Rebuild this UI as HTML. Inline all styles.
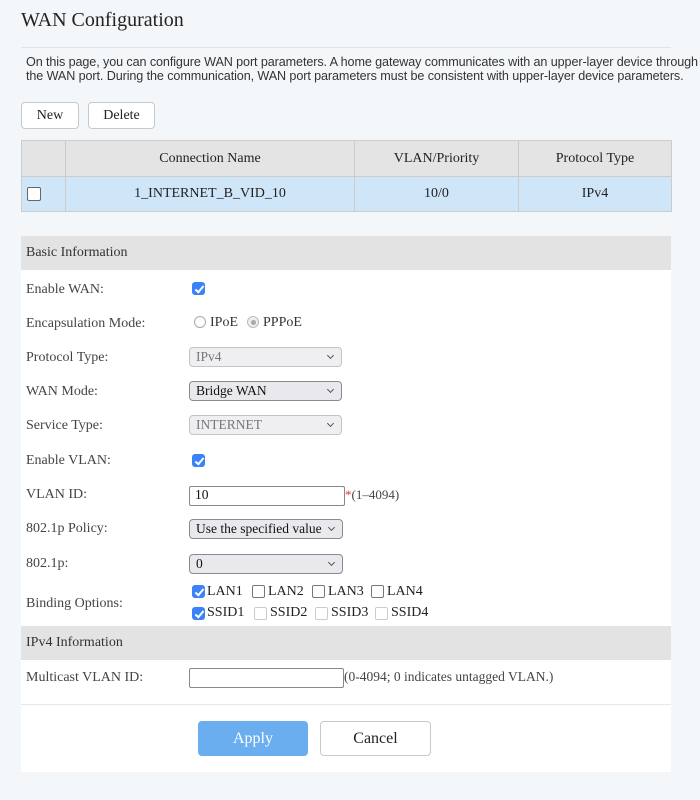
<!DOCTYPE html>
<html><head><style>
body{margin:0;width:700px;height:800px;background:#f4f7fa;font-family:"Liberation Serif",serif;color:#333;position:relative;overflow:hidden}
.a{position:absolute}
.t{font-size:14px;color:#444}
.sel{position:absolute;left:189px;width:153px;height:20px;border:1px solid #c3c3c8;border-radius:4px;background:#efeff2;font-size:13.5px;box-sizing:border-box;padding:1px 6px;color:#777}
.sel.on{border-color:#8a8a90;background:#e9e9ed;color:#111}
.sel:after{content:"";position:absolute;right:8px;top:5px;width:4px;height:4px;border-right:1.3px solid #555;border-bottom:1.3px solid #555;transform:rotate(45deg)}
.cb{position:absolute;width:13px;height:13px;border-radius:3px;background:#3b82f6;box-sizing:border-box}
.cb:after{content:"";position:absolute;left:4.5px;top:1.5px;width:3px;height:7px;border-right:2px solid #fff;border-bottom:2px solid #fff;transform:rotate(40deg)}
.ucb{position:absolute;width:13px;height:13px;border:1.5px solid #777;border-radius:2px;box-sizing:border-box;background:#fff}
.ucb.d{border-color:#ccc;border-width:1px}
.hd{position:absolute;left:21px;width:650px;height:34px;background:#e3e3e3;font-size:14px;line-height:34px;padding-left:5px;box-sizing:border-box;color:#333}
.btn{position:absolute;border:1px solid #c9c9c9;border-radius:4px;background:#fff;text-align:center;box-sizing:border-box;font-size:14px;color:#222}
td{border:1px solid #ccc;text-align:center;font-size:14px;color:#222;padding:0}
</style></head><body>
<div class="a" style="left:21px;top:9px;font-size:20px;color:#222">WAN Configuration</div>
<div class="a" style="left:21px;top:47px;width:650px;height:1px;background:#e3e3e3"></div>
<div class="a" style="left:26px;top:55px;width:680px;font-family:'Liberation Sans',sans-serif;font-size:12.6px;line-height:14px;color:#333;letter-spacing:-0.1px">On this page, you can configure WAN port parameters. A home gateway communicates with an upper-layer device through<br>the WAN port. During the communication, WAN port parameters must be consistent with upper-layer device parameters.</div>
<div class="btn" style="left:21px;top:102px;width:58px;height:27px;line-height:25px">New</div>
<div class="btn" style="left:88px;top:102px;width:67px;height:27px;line-height:25px">Delete</div>
<table class="a" style="left:21px;top:140px;width:651px;border-collapse:collapse">
<tr style="background:#e4e4e4;height:36px"><td style="width:43px"></td><td style="width:288px">Connection Name</td><td style="width:163px">VLAN/Priority</td><td>Protocol Type</td></tr>
<tr style="background:#cfe5f8;height:35px"><td style="text-align:left"><span style="display:inline-block;width:12px;height:12px;border:1.5px solid #666;border-radius:2px;background:#fff;margin-left:5px;vertical-align:middle"></span></td><td>1_INTERNET_B_VID_10</td><td>10/0</td><td>IPv4</td></tr>
</table>
<div class="a" style="left:21px;top:236px;width:650px;height:536px;background:#fff"></div>
<div class="hd" style="top:236px">Basic Information</div>
<div class="a t" style="left:26px;top:282px">Enable WAN:</div><div class="cb" style="left:192px;top:282px"></div>
<div class="a t" style="left:26px;top:316px">Encapsulation Mode:</div>
<div class="a" style="left:194px;top:316px;width:12px;height:12px;border:1px solid #aaa;border-radius:50%;box-sizing:border-box"></div>
<div class="a t" style="left:210px;top:315px;color:#333">IPoE</div>
<div class="a" style="left:247px;top:316px;width:12px;height:12px;border:1px solid #bbb;border-radius:50%;box-sizing:border-box;background:#eee"><div style="margin:2.5px;width:5px;height:5px;border-radius:50%;background:#aaa"></div></div>
<div class="a t" style="left:263px;top:315px;color:#333">PPPoE</div>
<div class="a t" style="left:26px;top:350px">Protocol Type:</div><div class="sel" style="top:347px">IPv4</div>
<div class="a t" style="left:26px;top:384px">WAN Mode:</div><div class="sel on" style="top:381px">Bridge WAN</div>
<div class="a t" style="left:26px;top:418px">Service Type:</div><div class="sel" style="top:415px">INTERNET</div>
<div class="a t" style="left:26px;top:453px">Enable VLAN:</div><div class="cb" style="left:192px;top:454px"></div>
<div class="a t" style="left:26px;top:487px">VLAN ID:</div>
<div class="a" style="left:189px;top:486px;width:156px;height:20px;border:1px solid #888;border-radius:2px;box-sizing:border-box;font-size:13.5px;padding:0 5px;color:#111">10</div>
<div class="a t" style="left:345px;top:487px;font-size:13px"><span style="color:#e33">*</span>(1–4094)</div>
<div class="a t" style="left:26px;top:521px">802.1p Policy:</div><div class="sel on" style="top:519px;width:154px">Use the specified value</div>
<div class="a t" style="left:26px;top:556px">802.1p:</div><div class="sel on" style="top:554px;width:154px">0</div>
<div class="a t" style="left:26px;top:596px">Binding Options:</div>
<div class="cb" style="left:192px;top:585px"></div><div class="a t" style="left:207px;top:584px;color:#222">LAN1</div>
<div class="ucb" style="left:252px;top:585px"></div><div class="a t" style="left:268px;top:584px;color:#222">LAN2</div>
<div class="ucb" style="left:312px;top:585px"></div><div class="a t" style="left:328px;top:584px;color:#222">LAN3</div>
<div class="ucb" style="left:371px;top:585px"></div><div class="a t" style="left:387px;top:584px;color:#222">LAN4</div>
<div class="cb" style="left:192px;top:607px"></div><div class="a t" style="left:207px;top:605px;color:#222">SSID1</div>
<div class="ucb d" style="left:254px;top:607px"></div><div class="a t" style="left:270px;top:605px;color:#222">SSID2</div>
<div class="ucb d" style="left:315px;top:607px"></div><div class="a t" style="left:331px;top:605px;color:#222">SSID3</div>
<div class="ucb d" style="left:375px;top:607px"></div><div class="a t" style="left:391px;top:605px;color:#222">SSID4</div>
<div class="hd" style="top:626px">IPv4 Information</div>
<div class="a t" style="left:26px;top:670px">Multicast VLAN ID:</div>
<div class="a" style="left:189px;top:668px;width:155px;height:20px;border:1px solid #888;border-radius:2px;box-sizing:border-box"></div>
<div class="a t" style="left:344px;top:669px;font-size:13.5px">(0-4094; 0 indicates untagged VLAN.)</div>
<div class="a" style="left:21px;top:704px;width:650px;height:1px;background:#e8e8e8"></div>
<div class="btn" style="left:198px;top:721px;width:110px;height:35px;line-height:33px;background:#6aaef0;border-color:#6aaef0;color:#fff;font-size:16px">Apply</div>
<div class="btn" style="left:320px;top:721px;width:111px;height:35px;line-height:33px;font-size:16px">Cancel</div>
</body></html>
